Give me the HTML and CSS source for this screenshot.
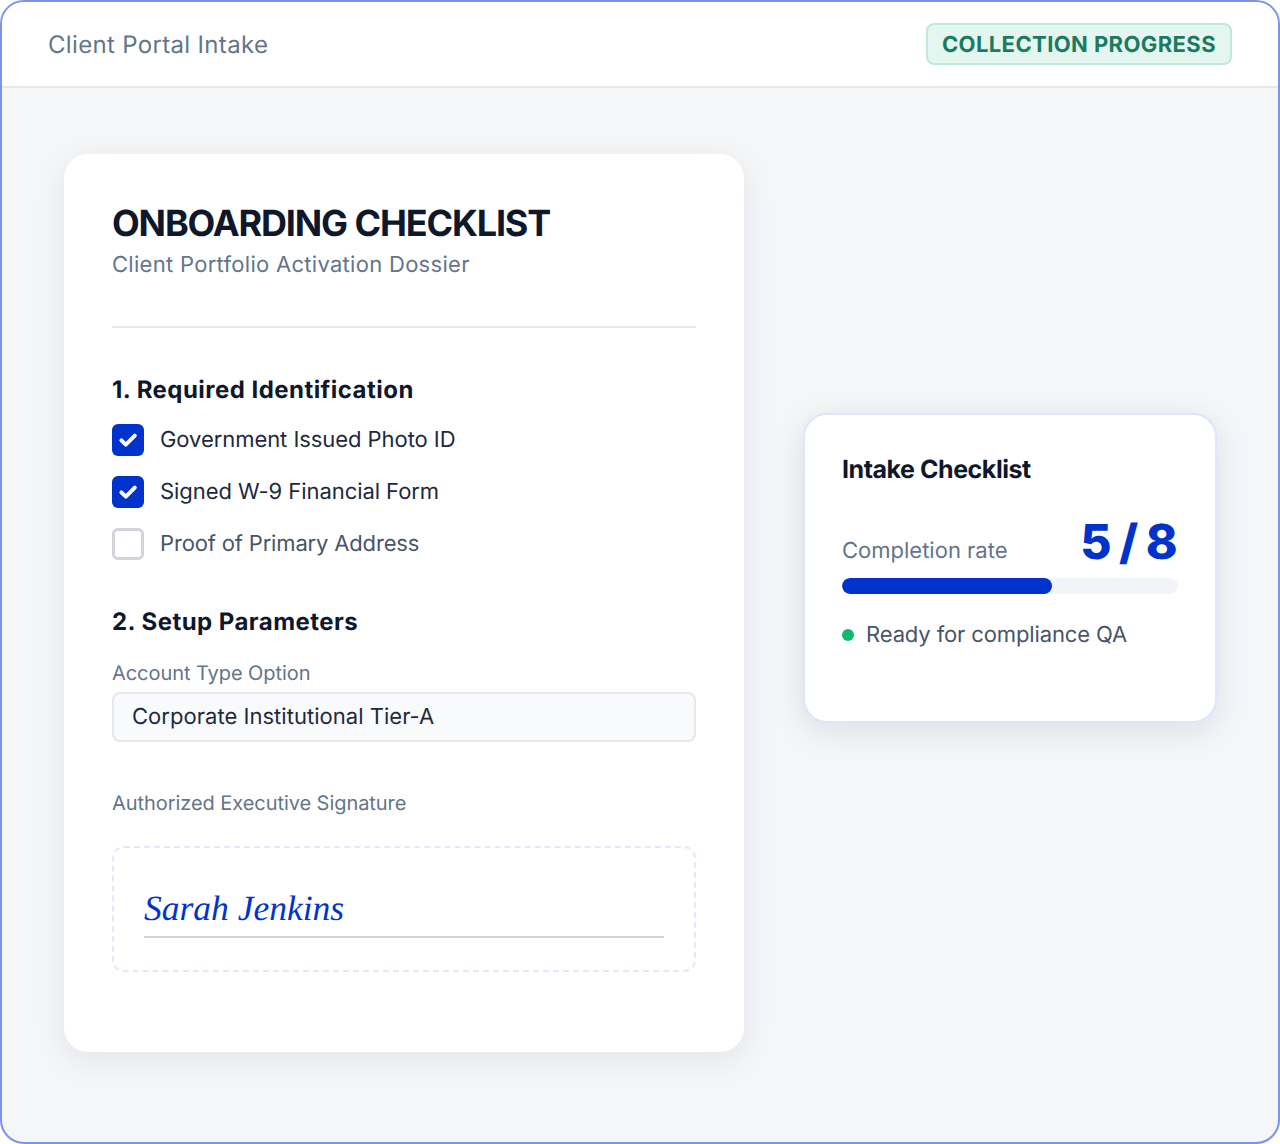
FILE: index.html
```html
<!DOCTYPE html>
<html lang="en">
<head>
<meta charset="utf-8">
<title>Client Portal Intake</title>
<link rel="stylesheet" href="styles.css">
</head>
<body>
<div class="frame">
  <header class="topbar">
    <div class="brand">Client Portal Intake</div>
    <div class="badge">COLLECTION PROGRESS</div>
  </header>
  <main class="stage">
    <section class="doc">
      <h1 class="doc-title">ONBOARDING CHECKLIST</h1>
      <p class="doc-sub">Client Portfolio Activation Dossier</p>
      <hr class="rule">
      <h2 class="sec-title">1. Required Identification</h2>
      <ul class="checks">
        <li class="check">
          <span class="box box-on"><svg viewBox="0 0 32 32" width="32" height="32"><path d="M9.4 16.4 L13.8 20.6 L22.8 11.6" fill="none" stroke="#fff" stroke-width="4" stroke-linecap="round" stroke-linejoin="round"/></svg></span>
          <span class="check-label">Government Issued Photo ID</span>
        </li>
        <li class="check">
          <span class="box box-on"><svg viewBox="0 0 32 32" width="32" height="32"><path d="M9.4 16.4 L13.8 20.6 L22.8 11.6" fill="none" stroke="#fff" stroke-width="4" stroke-linecap="round" stroke-linejoin="round"/></svg></span>
          <span class="check-label">Signed W-9 Financial Form</span>
        </li>
        <li class="check">
          <span class="box"></span>
          <span class="check-label check-open">Proof of Primary Address</span>
        </li>
      </ul>
      <h2 class="sec-title sec-two">2. Setup Parameters</h2>
      <div class="field-label">Account Type Option</div>
      <div class="field">Corporate Institutional Tier-A</div>
      <div class="field-label sig-label">Authorized Executive Signature</div>
      <div class="sig-box">
        <div class="sig-name">Sarah Jenkins</div>
      </div>
    </section>
    <aside class="widget">
      <h3 class="widget-title">Intake Checklist</h3>
      <div class="rate-row">
        <span class="rate-label">Completion rate</span>
        <span class="rate-value">5 / 8</span>
      </div>
      <div class="track"><div class="fill" style="width:62.5%"></div></div>
      <div class="status"><span class="dot"></span><span>Ready for compliance QA</span></div>
    </aside>
  </main>
</div>
</body>
</html>
```
FILE: styles.css
```css
* { box-sizing: border-box; }
html, body { margin: 0; padding: 0; background: #fff; }
body {
  font-family: Inter, "Liberation Sans", sans-serif;
  font-variation-settings: "opsz" 14;
  text-rendering: geometricPrecision;
}
.frame {
  width: 1280px; height: 1144px;
  border: 2px solid #7b93ec;
  border-radius: 24px;
  overflow: hidden;
  background: #f5f6f8;
  display: flex; flex-direction: column;
}
.topbar {
  height: 86px;
  background: #fff;
  border-bottom: 2px solid #e5e7eb;
  display: flex; align-items: center; justify-content: space-between;
  padding: 0 46px;
}
.brand { font-size: 24px; font-weight: 400; color: #64748b; letter-spacing: 0.33px; }
.badge {
  height: 42px;
  padding: 1px 14px 0;
  display: flex; align-items: center;
  background: #e4f6f0;
  border: 2px solid #bfeadb;
  border-radius: 8px;
  color: #1b7a5f;
  font-size: 22px; font-weight: 700; letter-spacing: 0.41px;
}
.stage {
  flex: 1;
  display: flex; justify-content: space-between; align-items: flex-start;
  padding: 66px 61px 0 62px;
}
.doc {
  width: 680px; height: 898px;
  background: #fff;
  border-radius: 24px;
  box-shadow: 0 8px 32px rgba(15, 23, 42, 0.08);
  padding: 47px 48px 48px;
}
.doc-title { margin: 0; font-size: 36px; line-height: 44px; font-weight: 700; color: #0f172a; letter-spacing: -1.13px; font-variation-settings: "opsz" 18; }
.doc-sub { margin: 4px 0 0; font-size: 22px; line-height: 32px; font-weight: 400; color: #64748b; letter-spacing: 0.29px; }
.rule { border: 0; height: 2px; background: #e5e7eb; margin: 45px 0 0; }
.sec-title { margin: 46px 0 0; font-size: 24px; line-height: 32px; font-weight: 700; color: #0f172a; letter-spacing: 0.46px; }
.sec-two { margin-top: 46px; }
.checks { list-style: none; margin: 18px 0 0; padding: 0; display: flex; flex-direction: column; gap: 20px; }
.check { display: flex; align-items: center; gap: 16px; height: 32px; }
.box {
  width: 32px; height: 32px; flex: none;
  border: 3px solid #d1d5db; border-radius: 6px; background: #fff;
  display: flex; align-items: center; justify-content: center;
}
.box-on { background: #0033cc; border: 0; }
.check-label { font-size: 22px; font-weight: 400; color: #1e293b; letter-spacing: -0.06px; }
.check-open { color: #475569; letter-spacing: -0.16px; }
.field-label { margin-top: 21px; font-size: 20px; line-height: 28px; font-weight: 400; color: #64748b; letter-spacing: -0.06px; }
.field {
  height: 50px; margin-top: 5px;
  background: #f8fafc;
  border: 2px solid #e5e7eb; border-radius: 8px;
  padding: 0 18px;
  display: flex; align-items: center;
  font-size: 22px; font-weight: 400; color: #1e293b; letter-spacing: 0.03px;
}
.sig-label { margin-top: 47px; }
.sig-box {
  height: 126px; margin-top: 29px;
  border: 2px dashed #e3e8fa; border-radius: 12px;
  padding: 38px 30px 0;
}
.sig-name {
  height: 52px;
  border-bottom: 2px solid #d1d5db;
  font-family: "Liberation Serif", serif; font-style: italic;
  font-size: 35.5px; line-height: 44px; color: #0033cc;
}
.widget {
  width: 414px; height: 310px; margin-top: 259px;
  background: #fff;
  border: 2px solid #dfe6fb;
  border-radius: 24px;
  box-shadow: 0 8px 32px rgba(15, 23, 42, 0.1);
  padding: 35px 37px;
}
.widget-title { margin: 0; font-size: 25px; line-height: 40px; font-weight: 700; color: #0f172a; letter-spacing: -0.45px; }
.rate-row { display: flex; justify-content: space-between; align-items: flex-end; margin-top: 21px; height: 62px; }
.rate-label { font-size: 22px; font-weight: 400; color: #64748b; line-height: 32px; margin-bottom: 6px; }
.rate-value { font-size: 48px; line-height: 58px; margin: 0 2px 2px 0; font-weight: 800; color: #0033cc; letter-spacing: -1.5px; font-variation-settings: "opsz" 24; }
.track { height: 16px; margin-top: 5px; background: #f3f4f8; border-radius: 8px; overflow: hidden; }
.fill { height: 100%; background: #0033cc; border-radius: 8px; }
.status { display: flex; align-items: center; gap: 12px; margin-top: 25px; font-size: 22px; font-weight: 400; color: #475569; line-height: 32px; letter-spacing: -0.12px; }
.dot { width: 12px; height: 12px; border-radius: 50%; background: #14b86c; flex: none; }
```
